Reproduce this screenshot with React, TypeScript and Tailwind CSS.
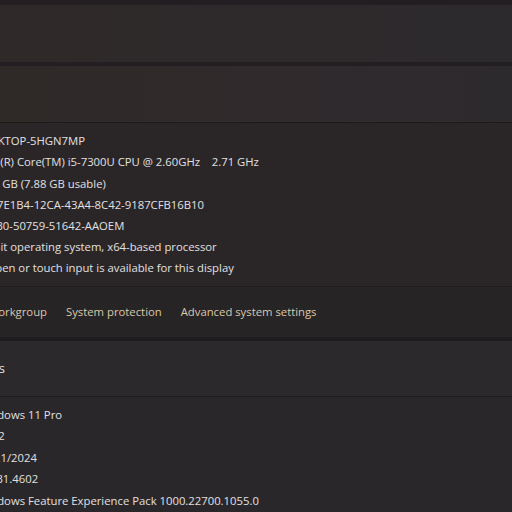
import React from 'react';

const deviceRows = [
  'DESKTOP-5HGN7MP',
  'Intel(R) Core(TM) i5-7300U CPU @ 2.60GHz    2.71 GHz',
  '8.00 GB (7.88 GB usable)',
  'A057E1B4-12CA-43A4-8C42-9187CFB16B10',
  '00330-50759-51642-AAOEM',
  '64-bit operating system, x64-based processor',
  'No pen or touch input is available for this display',
];

const windowsRows = [
  'Windows 11 Pro',
  '23H2',
  '11/21/2024',
  '22631.4602',
  'Windows Feature Experience Pack 1000.22700.1055.0',
];

function Row({ text, tall }: { text: string; tall?: boolean }) {
  return (
    <div
      className={
        'flex items-center whitespace-pre -ml-[23px] text-[11.3px] text-[#e2e0e0] ' +
        (tall ? 'h-[21.5px]' : 'h-[21.2px]')
      }
    >
      {text}
    </div>
  );
}

export default function App() {
  return (
    <div
      className="w-[512px] h-[512px] overflow-hidden bg-[#221e22] pt-[5px]"
      style={{ fontFamily: '"Open Sans", "Noto Sans", sans-serif' }}
    >
      {/* card above */}
      <div className="h-[57px] bg-gradient-to-r from-[#2f2929] via-[#2e2a2b] to-[#2d2a2e]" />
      <div className="h-[4px] bg-[#221e21]" />

      {/* Device specifications */}
      <div className="h-[57px] bg-gradient-to-r from-[#2f2928] via-[#302a2c] to-[#2d2a2e] border-b border-[#1d1a1c]" />
      <div className="bg-[#2a2628] pt-[8px] pb-[7px] border-b border-[#1f1c1e]">
        {deviceRows.map((r) => (
          <Row key={r} text={r} />
        ))}
      </div>
      <div className="h-[50px] bg-[#272426] flex items-center gap-[19px] text-[11.3px] text-[#dcc7ab] whitespace-nowrap">
        <div className="w-[150px] -ml-[103px] flex justify-end shrink-0">Domain or workgroup</div>
        <span>System protection</span>
        <span>Advanced system settings</span>
      </div>
      <div className="h-[4px] bg-[#1f1c1f]" />

      {/* Windows specifications */}
      <div className="h-[56px] bg-[#2c292c] border-b border-[#1e1c1e] flex items-center text-[13px] text-[#e4e2e2]">
        <div className="w-[200px] -ml-[195px] flex justify-end shrink-0 whitespace-nowrap">
          Windows specifications
        </div>
      </div>
      <div className="bg-[#29272a] pt-[7px] h-full">
        {windowsRows.map((r) => (
          <Row key={r} text={r} tall />
        ))}
      </div>
    </div>
  );
}
